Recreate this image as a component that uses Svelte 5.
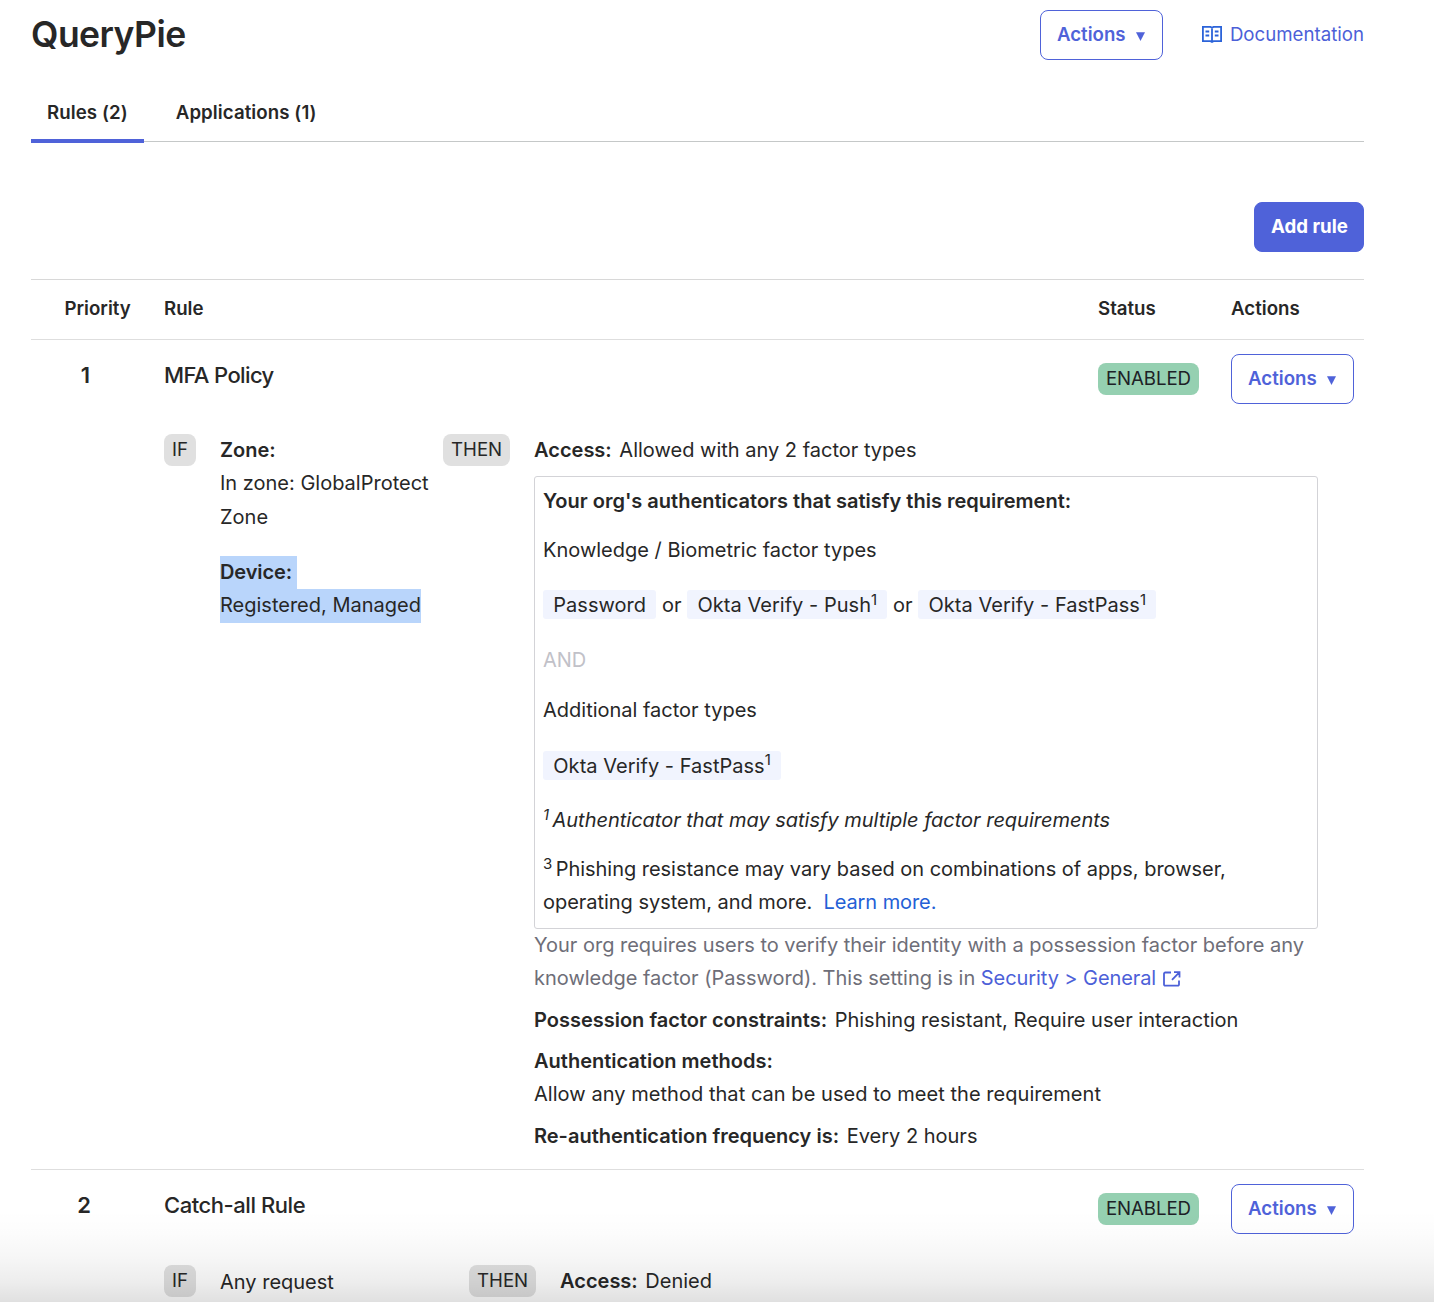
<script lang="ts">
  const tabs = [
    { label: 'Rules (2)', active: true },
    { label: 'Applications (1)', active: false },
  ];
</script>

{#snippet actionsButton()}
  <button class="btn outline">
    Actions
    <svg class="caret" viewBox="0 0 9 9" aria-hidden="true"><path d="M0 0.3h9L4.5 9z" /></svg>
  </button>
{/snippet}

{#snippet tag(name: string, note: string)}
  <span class="tag">{name}{#if note}<sup>{note}</sup>{/if}</span>
{/snippet}

{#snippet ruleHead(priority: number, name: string)}
  <div class="priority">{priority}</div>
  <h2>{name}</h2>
  <div class="status"><span class="badge enabled">ENABLED</span></div>
  <div class="row-actions">{@render actionsButton()}</div>
{/snippet}

<div class="page">
  <header>
    <h1>QueryPie</h1>
    {@render actionsButton()}
    <a class="docs" href="#docs">
      <svg viewBox="0 0 20 17" aria-hidden="true">
        <path d="M.9 .9H8.500L10 1.700l1.500-.8h7.600v14.200H11.500L10 15.900l-1.500-.8H.9zM10 1.700v14.500" />
        <path d="M3.500 5.500h3.700M3.500 9.500h3.700M12.800 5.500h3.700M12.800 9.500h3.700" />
      </svg>
      Documentation
    </a>
  </header>

  <nav>
    {#each tabs as tab}
      <a class="tab" class:active={tab.active} href="#tab">{tab.label}</a>
    {/each}
  </nav>

  <div class="toolbar"><button class="btn primary">Add rule</button></div>

  <section class="table">
    <div class="grid thead">
      <div class="priority-label">Priority</div>
      <div>Rule</div>
      <div>Status</div>
      <div>Actions</div>
    </div>

    <article class="grid rule first">
      {@render ruleHead(1, 'MFA Policy')}
      <div class="body">
        <span class="badge">IF</span>
        <div class="conditions">
          <p><b>Zone:</b></p>
          <p>In zone: GlobalProtect Zone</p>
          <p class="device"><b class="selected">Device:&nbsp;</b></p>
          <p><span class="selected">Registered, Managed</span></p>
        </div>
        <span class="badge">THEN</span>
        <div class="outcome">
          <p><b>Access:</b> Allowed with any 2 factor types</p>
          <div class="box">
            <p><b>Your org's authenticators that satisfy this requirement:</b></p>
            <p class="para">Knowledge / Biometric factor types</p>
            <p class="tags">
              {@render tag('Password', '')} or {@render tag('Okta Verify - Push', '1')} or {@render tag('Okta Verify - FastPass', '1')}
            </p>
            <p class="and">AND</p>
            <p class="para">Additional factor types</p>
            <p class="tags">{@render tag('Okta Verify - FastPass', '1')}</p>
            <p class="footnote"><sup>1</sup> Authenticator that may satisfy multiple factor requirements</p>
            <p class="para note">
              <sup>3</sup> Phishing resistance may vary based on combinations of apps, browser, operating system, and more.&nbsp; <a class="learn" href="#learn">Learn more.</a>
            </p>
          </div>
          <p class="hint">
            Your org requires users to verify their identity with a possession factor before any knowledge factor (Password). This setting is in
            <a href="#security">Security &gt; General<svg viewBox="0 0 18 16" aria-hidden="true"><path d="M8 1.500H2.200a1.200 1.200 0 0 0-1.200 1.200v10.800a1.200 1.200 0 0 0 1.200 1.200h12.600a1.200 1.200 0 0 0 1.200-1.200V9.500M11 1.200h5.500v5.300M16.300 1.400L9 8.800" /></svg></a>
          </p>
          <p class="fact"><b>Possession factor constraints:</b> Phishing resistant, Require user interaction</p>
          <p class="fact"><b>Authentication methods:</b></p>
          <p class="method">Allow any method that can be used to meet the requirement</p>
          <p class="fact"><b>Re-authentication frequency is:</b> Every 2 hours</p>
        </div>
      </div>
    </article>

    <article class="grid rule">
      {@render ruleHead(2, 'Catch-all Rule')}
      <div class="body catch-all">
        <span class="badge">IF</span>
        <div class="conditions"><p>Any request</p></div>
        <span class="badge">THEN</span>
        <div class="outcome"><p><b>Access:</b> Denied</p></div>
      </div>
    </article>
  </section>
  <div class="fade"></div>
</div>

<style>
  :global(body) { background: #fff; }
  .page {
    position: relative;
    box-sizing: border-box;
    height: 1302px;
    overflow: hidden;
    padding: 10px 70px 0 31px;
    font: 400 20px/33.33px Inter, sans-serif;
    color: #272727;
  }
  h1, h2, p { margin: 0; }
  a { color: #4c60d8; text-decoration: none; }
  b { font-weight: 600; margin-right: 2px; }
  header { display: flex; align-items: center; height: 50px; }
  h1 {
    flex: 1;
    font-size: 35.500px;
    font-weight: 600;
    letter-spacing: -0.550px;
    line-height: 50px;
  }
  .btn {
    box-sizing: border-box;
    height: 50px;
    padding: 0 16px 1px;
    border: 1px solid #4f62d9;
    border-radius: 8px;
    font: 600 18.670px/24px Inter, sans-serif;
    color: #4f62d9;
    background: #fff;
  }
  .btn.outline { display: flex; align-items: center; width: 123px; }
  .btn.primary { width: 110px; color: #fff; background: #4f62d9; white-space: nowrap; font-weight: 650; }
  .caret { width: 9px; height: 9px; margin: 3px 0 0 10px; fill: #4f62d9; }
  .docs {
    display: flex;
    align-items: center;
    gap: 8px;
    margin-left: 39px;
    padding-bottom: 1px;
    font-size: 18.670px;
  }
  .docs svg { width: 20px; height: 17px; fill: none; stroke: #2b63d9; stroke-width: 1.800; }
  nav {
    display: flex;
    gap: 16px;
    height: 81px;
    border-bottom: 1px solid #c5c8c8;
  }
  .tab {
    box-sizing: border-box;
    height: 83px;
    padding: 36px 16px 0;
    font-weight: 600;
    font-size: 18.670px;
    letter-spacing: 0.080px;
    line-height: 33px;
    color: #272727;
  }
  .tab.active { border-bottom: 4px solid #4f62d9; }
  .toolbar { display: flex; justify-content: flex-end; padding: 60px 0 27px; }
  .table { border-top: 1px solid #d8d8d8; }
  .grid { display: grid; grid-template-columns: 133px 934px 133px 133px; }
  .thead {
    height: 59px;
    border-bottom: 1px solid #dedede;
    font-weight: 600;
    font-size: 18.670px;
    line-height: 57px;
  }
  .priority-label { padding-left: 33.500px; }
  .rule { padding-top: 14px; grid-template-rows: 79.500px auto; }
  .rule.first { height: 815px; border-bottom: 1px solid #dedede; }
  .priority { width: 106px; text-align: center; font-weight: 600; font-size: 22px; line-height: 43px; }
  .first .priority { width: 109px; }
  h2 { font-size: 22px; font-weight: 550; letter-spacing: -0.450px; line-height: 43px; }
  .first h2 { letter-spacing: -0.620px; }
  .status { padding-top: 9px; }
  .badge {
    display: block;
    box-sizing: border-box;
    width: max-content;
    height: 32px;
    padding: 0 8px;
    border-radius: 8px;
    background: #e0e0e0;
    font-size: 18.670px;
    line-height: 31px;
  }
  .enabled { width: 101px; background: #95d0b1; color: #1d2126; letter-spacing: -0.100px; }
  .body {
    grid-column: 2 / 5;
    display: grid;
    grid-template-columns: 56px 223px 91px 784px;
  }
  .catch-all { grid-template-columns: 56px 249px 91px 758px; padding-top: 1px; }
  .catch-all .conditions { padding-top: 1px; }
  .conditions { padding: 0.400px 10px 0 0; }
  .device { margin-top: 22px; }
  .selected { display: inline-block; height: 33.330px; margin: 0; background: #b9d5fb; vertical-align: top; }
  b.selected { letter-spacing: -0.100px; }
  .box {
    box-sizing: border-box;
    height: 453px;
    margin-top: 9px;
    padding: 8px 8px 0;
    border: 1px solid #d3d3d7;
    border-radius: 3px;
  }
  .para { margin-top: 15.600px; }
  .tags, .and { margin-top: 22px; }
  .and { color: #c1c1c8; }
  .and + .para { margin-top: 16.500px; }
  .footnote { margin-top: 21.200px; font-style: italic; letter-spacing: -0.020px; }
  .tag {
    display: inline-block;
    height: 29px;
    padding: 0 10.300px;
    border-radius: 3px;
    background: #f1f4fe;
    line-height: 30px;
    letter-spacing: 0.030px;
  }
  sup { font-size: 15px; line-height: 0; vertical-align: baseline; position: relative; top: -7.500px; }
  .footnote sup, .note sup { margin-right: -2.200px; }
  .note { letter-spacing: -0.030px; }
  .learn { color: #2460d6; letter-spacing: -0.080px; }
  .hint { color: #6e6e78; letter-spacing: -0.010px; }
  .hint a { letter-spacing: -0.080px; }
  .hint svg {
    width: 18px;
    height: 16px;
    margin-left: 7px;
    vertical-align: -2px;
    fill: none;
    stroke: #4c60d8;
    stroke-width: 1.800;
  }
  .fact { margin-top: 8.300px; }
  .method { margin: -0.500px 0 8.800px; letter-spacing: 0.045px; }
  .method + .fact { margin-top: 0; }
  .fade {
    position: absolute;
    inset: auto 0 0;
    height: 92px;
    pointer-events: none;
    background: linear-gradient(transparent, rgba(0, 0, 0, 0.012) 25%, rgba(0, 0, 0, 0.035) 52%, rgba(0, 0, 0, 0.070) 78%, rgba(0, 0, 0, 0.120));
  }
</style>
